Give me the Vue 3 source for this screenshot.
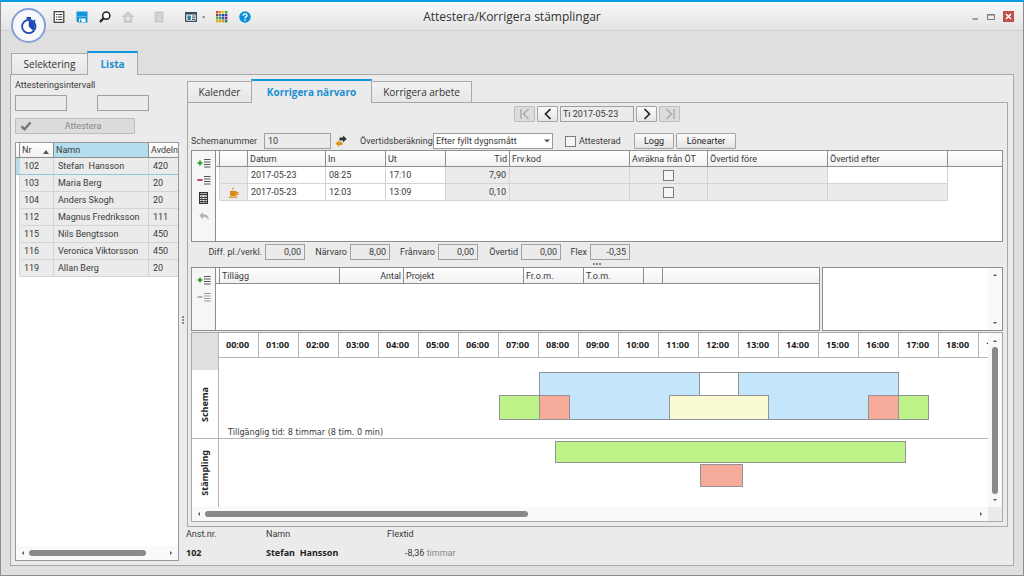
<script setup>
import { ref } from 'vue'

const employees = [
  { nr: '102', name: 'Stefan\u00a0 Hansson', dept: '420' },
  { nr: '103', name: 'Maria Berg', dept: '20' },
  { nr: '104', name: 'Anders Skogh', dept: '20' },
  { nr: '112', name: 'Magnus Fredriksson', dept: '111' },
  { nr: '115', name: 'Nils Bengtsson', dept: '450' },
  { nr: '116', name: 'Veronica Viktorsson', dept: '450' },
  { nr: '119', name: 'Allan Berg', dept: '20' }
]
const selected = ref('102')

const stamps = [
  { date: '2017-05-23', from: '08:25', to: '17:10', time: '7,90', pause: false },
  { date: '2017-05-23', from: '12:03', to: '13:09', time: '0,10', pause: true }
]

const sums = [
  { id: 'diff', label: 'Diff. pl./verkl.', value: '0,00' },
  { id: 'present', label: 'Närvaro', value: '8,00' },
  { id: 'absent', label: 'Frånvaro', value: '0,00' },
  { id: 'overtime', label: 'Övertid', value: '0,00' },
  { id: 'flex', label: 'Flex', value: '-0,35' }
]

const hours = Array.from({ length: 20 }, (_, i) => String(i).padStart(2, '0') + ':00')

const DAY = 959
const toPx = (minutes) => Math.round((minutes * DAY) / 1440)
const place = (b) => ({
  left: toPx(b.from) + 'px',
  width: toPx(b.to) - toPx(b.from) + 1 + 'px'
})
const schedule = [
  { from: 480, to: 1020, kind: 'frame' },
  { from: 480, to: 720, kind: 'work' },
  { from: 780, to: 1020, kind: 'work' },
  { from: 420, to: 480, kind: 'flex' },
  { from: 480, to: 525, kind: 'core' },
  { from: 675, to: 825, kind: 'lunch' },
  { from: 975, to: 1020, kind: 'core' },
  { from: 1020, to: 1065, kind: 'flex' }
]
const clocked = [
  { from: 505, to: 1030, kind: 'present' },
  { from: 723, to: 786, kind: 'break' }
]
const palette = ['#e03c31', '#f08c1e', '#e8c800', '#3aa845', '#8a3a2a', '#1d7ac2', '#2b3fa0', '#55308f', '#5fae30', '#35a040', '#3a4aa0', '#8a2a8a', '#d8b020', '#e8a000', '#c8a020', '#1f8a50']
</script>

<template>
  <div class="window">
    <header class="titlebar">
      <div class="logo">
        <svg viewBox="0 0 36 36" width="36" height="36">
          <circle cx="17.5" cy="17.5" r="16.500" fill="#f7f8fb" stroke="#869fd8" stroke-width="2" />
          <circle cx="17.800" cy="18.500" r="6.700" fill="#fff" stroke="#1b48b0" stroke-width="1.800" />
          <path d="M17.800 18.500V12.800A5.600 5.600 0 0 1 21.800 22.500Z" fill="#1b48b0" />
          <path d="M15.600 10h4.400M17.800 9.500v3M22.800 12.300l1.200 1.200" stroke="#1b48b0" stroke-width="2" />
        </svg>
      </div>
      <nav class="tools">
        <button aria-label="Lista">
          <svg viewBox="0 0 12 12" width="12" height="12"><rect x="1.200" y=".7" width="9.600" height="10.600" fill="#fff" stroke="#333" stroke-width="1.200" /><path d="M3 3.500h1.300M3 6h1.300M3 8.500h1.300M5.200 3.500H9.300M5.200 6H9.300M5.200 8.500H9.300" stroke="#333" /></svg>
        </button>
        <button aria-label="Spara">
          <svg viewBox="0 0 12 12" width="12" height="12"><path d="M.5.5h11v11H2L.5 10Z" fill="#1296db" /><path d="M1.500 5.500h9" stroke="#5bb8ea" /><path d="M3 7.500h6.500v3.500H3z" fill="#fff" /><path d="M4 8.500h1.500V11H4z" fill="#1296db" /></svg>
        </button>
        <button aria-label="Sök">
          <svg viewBox="0 0 12 12" width="12" height="12"><circle cx="7.300" cy="4.600" r="3.600" fill="#fff" stroke="#222" stroke-width="1.500" /><path d="M4.600 7.200.9 11" stroke="#222" stroke-width="2.200" /></svg>
        </button>
        <button aria-label="Hem" disabled>
          <svg viewBox="0 0 12 12" width="12" height="12"><path d="M.5 6 6 1.300 11.500 6" fill="none" stroke="#c6c6c6" stroke-width="1.500" /><path d="M2.300 6 6 3l3.700 3v5.300H2.300Z" fill="#d0d0d0" stroke="#c2c2c2" /><circle cx="6" cy="7.500" r="1.600" fill="#eee" /></svg>
        </button>
        <button class="calc" aria-label="Beräkna" disabled>
          <svg viewBox="0 0 12 12" width="12" height="12"><path d="M1.500.5h9v11h-9z" fill="#cacaca" /><path d="M3 3.500h6M3 6h6M6 5.500V11M3 8.500h6" stroke="#dedede" /></svg>
        </button>
        <button class="layout" aria-label="Layout">
          <svg viewBox="0 0 20 12" width="20" height="12"><rect x=".7" y="1.700" width="10.600" height="8.600" fill="#fff" stroke="#2c3e50" stroke-width="1.200" /><path d="M1 2.800h10" stroke="#2c3e50" stroke-width="1.400" /><path d="M2.500 4.500h3.300v4.500H2.500z" fill="#2a7aa8" /><path d="M7 5h3M7 6.800h3M7 8.500h3" stroke="#456" /><path d="M17 5.500h3.500l-1.700 2Z" fill="#666" /></svg>
        </button>
        <button aria-label="Färger">
          <svg viewBox="0 0 12 12" width="12" height="12">
            <rect v-for="(c, i) in palette" :key="i" :x="(i % 4) * 3" :y="Math.floor(i / 4) * 3" width="2.400" height="2.400" :fill="c" />
          </svg>
        </button>
        <button aria-label="Hjälp">
          <svg viewBox="0 0 12 12" width="12" height="12"><circle cx="6" cy="6" r="5.800" fill="#0a8fd8" /><path d="M4.100 4.700C4.100 2.300 7.900 2.300 7.900 4.500 7.900 5.800 6 5.900 6 7.300M6 8.300v1.500" fill="none" stroke="#fff" stroke-width="1.400" /></svg>
        </button>
      </nav>
      <h1>Attestera/Korrigera stämplingar</h1>
      <div class="winbtns">
        <button aria-label="Minimera"><svg viewBox="0 0 8 8" width="8" height="8"><path d="M1.500 6h5.500" stroke="#666" stroke-width="1.200" /></svg></button>
        <button aria-label="Maximera"><svg viewBox="0 0 8 8" width="8" height="8"><path d="M.5 1.500h7v5h-7zM.5 2h7" fill="none" stroke="#777" /></svg></button>
        <button class="close" aria-label="Stäng"><svg viewBox="0 0 11 11" width="11" height="11"><path d="M3 3l5 5M8 3 3 8" stroke="#fff" stroke-width="1.500" /></svg></button>
      </div>
    </header>

    <div class="tabs outer">
      <button class="tab">Selektering</button>
      <button class="tab active">Lista</button>
    </div>

    <main class="panel">
      <aside class="side">
        <label class="caption" for="ifrom">Attesteringsintervall</label>
        <div class="interval">
          <input id="ifrom" type="text" class="field" />
          <input type="text" class="field" aria-label="Till" />
        </div>
        <button class="btn attest" disabled>
          <svg viewBox="0 0 12 10" width="12" height="10"><path d="M1.500 5.300 4.500 8.200 10.500 1.500" fill="none" stroke="#777" stroke-width="2.400" /></svg>
          <span>Attestera</span>
        </button>
        <div class="listbox">
          <table class="list">
            <colgroup><col class="g4" /><col class="c34" /><col class="c95" /><col /></colgroup>
            <thead>
              <tr><th></th><th>Nr <svg class="sort" viewBox="0 0 6 4" width="6" height="4"><path d="M0 4h6L3 0Z" fill="#555" /></svg></th><th class="hot">Namn</th><th>Avdelning</th></tr>
            </thead>
            <tbody>
              <tr v-for="e in employees" :key="e.nr" :class="{ sel: e.nr === selected }" @click="selected = e.nr">
                <td></td><td>{{ e.nr }}</td><td>{{ e.name }}</td><td>{{ e.dept }}</td>
              </tr>
            </tbody>
          </table>
          <div class="hscroll">
            <svg viewBox="0 0 4 6" width="4" height="6"><path d="M3 1v4L1 3Z" fill="#555" /></svg>
            <div class="track"><div class="thumb side-thumb"></div></div>
            <svg viewBox="0 0 4 6" width="4" height="6"><path d="M1 1v4l2-2Z" fill="#555" /></svg>
          </div>
        </div>
      </aside>
      <div class="splitter"><i></i><i></i><i></i></div>

      <section class="content">
        <div class="tabs inner">
          <button class="tab">Kalender</button>
          <button class="tab active">Korrigera närvaro</button>
          <button class="tab">Korrigera arbete</button>
        </div>
        <div class="sheet">
          <div class="nav">
            <button class="btn sq" aria-label="Första" disabled><svg viewBox="0 0 12 12" width="12" height="12"><path d="M2 1v10M9.500 1 4.500 6l5 5" fill="none" stroke="#aaa" stroke-width="1.500" /></svg></button>
            <button class="btn sq" aria-label="Föregående"><svg viewBox="0 0 12 12" width="12" height="12"><path d="M8.500 1 3.500 6l5 5" fill="none" stroke="#222" stroke-width="1.700" /></svg></button>
            <input class="field date" value="Ti 2017-05-23" aria-label="Datum" readonly />
            <button class="btn sq" aria-label="Nästa"><svg viewBox="0 0 12 12" width="12" height="12"><path d="M3.500 1l5 5-5 5" fill="none" stroke="#222" stroke-width="1.700" /></svg></button>
            <button class="btn sq" aria-label="Sista" disabled><svg viewBox="0 0 12 12" width="12" height="12"><path d="M10 1v10M2.500 1l5 5-5 5" fill="none" stroke="#aaa" stroke-width="1.500" /></svg></button>
          </div>

          <div class="filter">
            <label class="schema-label" for="schema">Schemanummer</label>
            <input id="schema" class="field schema" value="10" readonly />
            <svg class="swap" viewBox="0 0 12 12" width="12" height="12"><path d="M4.500 2.500H8V.5L11.800 4 8 7.300V5.500H4.500Z" fill="#333" /><path d="M7.500 7v3H4.500v2L.3 8.500 4.500 5v2Z" fill="#e0951d" /></svg>
            <label class="ot-label" for="ot">Övertidsberäkning</label>
            <div class="combo">
              <select id="ot"><option>Efter fyllt dygnsmått</option></select>
              <svg viewBox="0 0 6 4" width="6" height="4"><path d="M0 .5h6L3 3.500Z" fill="#555" /></svg>
            </div>
            <label class="tick"><input type="checkbox" />Attesterad</label>
            <button class="btn logg">Logg</button>
            <button class="btn lone">Lönearter</button>
          </div>

          <div class="gridbox stampbox">
            <div class="rail">
              <button aria-label="Lägg till"><svg viewBox="0 0 14 10" width="14" height="10"><path d="M.5 5h5M3 2.500v5" stroke="#1a9b1f" stroke-width="1.600" /><path d="M7 1.500h6.500M7 4h6.500M7 6.500h6.500M7 9h6.500" stroke="#555" /></svg></button>
              <button aria-label="Ta bort"><svg viewBox="0 0 14 10" width="14" height="10"><path d="M.5 5h5" stroke="#c4122e" stroke-width="1.600" /><path d="M7 1.500h6.500M7 4h6.500M7 6.500h6.500M7 9h6.500" stroke="#555" /></svg></button>
              <button aria-label="Räkna"><svg viewBox="0 0 14 12" width="14" height="12"><rect x="2.600" y=".6" width="7.800" height="10.800" fill="#fff" stroke="#333" stroke-width="1.200" /><path d="M3 2.500h7" stroke="#333" stroke-width="1.500" /><path d="M3 5.500h7M3 7.500h7M3 9.500h7M5 4v7M8 4v7" stroke="#333" stroke-width=".9" /></svg></button>
              <button aria-label="Ångra" disabled><svg viewBox="0 0 14 10" width="14" height="10"><path d="M6 1v2.200c4 0 6 2 5.500 6C10.500 6.800 9 6 6 6v2.300L2.300 4.600Z" fill="#b4b4b4" /></svg></button>
            </div>
            <table class="grid">
              <colgroup><col class="g4" /><col class="c28" /><col class="c78" /><col class="c60" /><col class="c60" /><col class="c64" /><col class="c120" /><col class="c78" /><col class="c120" /><col class="c120" /><col /></colgroup>
              <thead>
                <tr><th></th><th></th><th>Datum</th><th>In</th><th>Ut</th><th class="r">Tid</th><th>Frv.kod</th><th>Avräkna från ÖT</th><th>Övertid före</th><th>Övertid efter</th><th></th></tr>
              </thead>
              <tbody>
                <tr v-for="s in stamps" :key="s.from">
                  <td class="w"></td>
                  <td class="ic"><svg v-if="s.pause" viewBox="0 0 10 11" width="10" height="11"><path d="M1 4h6.500v1H9.500v3H7.200C7 8.800 6.500 9 6 9H2.500C1.500 9 1 8.300 1 7ZM7.500 6v1h1V6ZM0 9.600h8.500v1.100H0Z" fill="#d98a10" fill-rule="evenodd" /><path d="M3.700 3.300C3 2.300 5 1.800 4.200.4" fill="none" stroke="#d98a10" /></svg></td>
                  <td class="w">{{ s.date }}</td><td class="w">{{ s.from }}</td><td class="w">{{ s.to }}</td>
                  <td class="r">{{ s.time }}</td><td></td>
                  <td class="ck"><input type="checkbox" aria-label="Avräkna från ÖT" /></td>
                  <td></td><td :class="{ w: !s.pause }"></td><td class="w none"></td>
                </tr>
              </tbody>
            </table>
          </div>

          <div class="sums">
            <div v-for="s in sums" :key="s.id" class="sum">
              <label :for="s.id">{{ s.label }}</label>
              <input :id="s.id" class="field r" :value="s.value" readonly />
            </div>
            <div class="dots"><i></i><i></i><i></i></div>
          </div>

          <div class="pair">
            <div class="gridbox addbox">
              <div class="rail">
                <button aria-label="Lägg till tillägg"><svg viewBox="0 0 14 10" width="14" height="10"><path d="M.5 5h5M3 2.500v5" stroke="#1a9b1f" stroke-width="1.600" /><path d="M7 1.500h6.500M7 4h6.500M7 6.500h6.500M7 9h6.500" stroke="#555" /></svg></button>
                <button aria-label="Ta bort tillägg" disabled><svg viewBox="0 0 14 10" width="14" height="10"><path d="M.5 5h5" stroke="#888" stroke-width="1.200" /><path d="M7 1.500h6.500M7 4h6.500M7 6.500h6.500M7 9h6.500" stroke="#999" /></svg></button>
              </div>
              <table class="grid">
                <colgroup><col class="g4" /><col class="c120" /><col class="c64" /><col class="c120" /><col class="c60" /><col class="c60" /><col class="c19" /><col /></colgroup>
                <thead>
                  <tr><th></th><th>Tillägg</th><th class="r">Antal</th><th>Projekt</th><th>Fr.o.m.</th><th>T.o.m.</th><th></th><th></th></tr>
                </thead>
              </table>
            </div>
            <div class="note">
              <textarea aria-label="Anteckning"></textarea>
              <div class="vscroll">
                <svg viewBox="0 0 6 4" width="6" height="4"><path d="M1 3h4L3 1Z" fill="#555" /></svg>
                <svg viewBox="0 0 6 4" width="6" height="4"><path d="M1 1h4L3 3Z" fill="#555" /></svg>
              </div>
            </div>
          </div>

          <div class="timeline">
            <div class="tl-main">
              <div class="tl-left">
                <div class="tl-corner"></div>
                <div class="tl-name schema-name"><span>Schema</span></div>
                <div class="tl-name"><span>Stämpling</span></div>
              </div>
              <div class="tl-view">
                <div class="tl-head"><div v-for="h in hours" :key="h">{{ h }}</div></div>
                <div class="lane lane-schema">
                  <div v-for="(b, i) in schedule" :key="i" class="bar" :class="b.kind" :style="place(b)"></div>
                  <p>Tillgänglig tid: 8 timmar (8 tim. 0 min)</p>
                </div>
                <div class="lane lane-stamp">
                  <div v-for="(b, i) in clocked" :key="i" class="bar" :class="b.kind" :style="place(b)"></div>
                </div>
              </div>
              <div class="vscroll">
                <svg viewBox="0 0 6 4" width="6" height="4"><path d="M1 3h4L3 1Z" fill="#555" /></svg>
                <div class="vthumb"></div>
                <svg viewBox="0 0 6 4" width="6" height="4"><path d="M1 1h4L3 3Z" fill="#555" /></svg>
              </div>
            </div>
            <div class="tl-foot">
              <div class="hscroll">
                <svg viewBox="0 0 4 6" width="4" height="6"><path d="M3 1v4L1 3Z" fill="#555" /></svg>
                <div class="track"><div class="thumb tl-thumb"></div></div>
                <svg viewBox="0 0 4 6" width="4" height="6"><path d="M1 1v4l2-2Z" fill="#555" /></svg>
              </div>
              <div class="tl-grip"></div>
            </div>
          </div>
        </div>

        <dl class="info">
          <div><dt>Anst.nr.</dt><dd>102</dd></div>
          <div class="who"><dt>Namn</dt><dd>Stefan&nbsp; Hansson</dd></div>
          <div class="balance"><dt>Flextid</dt><dd>-8,36 <small>timmar</small></dd></div>
        </dl>
      </section>
    </main>
  </div>
</template>

<style>
body { background: #dfdfdf; }
</style>

<style scoped>
* { box-sizing: border-box; }
.window {
  min-height: 100vh;
  display: flex;
  flex-direction: column;
  background: #dfdfdf;
  border: 1px solid #8c8c8c;
  border-top: 2px solid #0a9de8;
  padding-bottom: 9px;
  font: 9px/12px Roboto, "DejaVu Sans Condensed", sans-serif;
  color: #3a3a3a;
}
button, input, select, textarea { font: inherit; color: inherit; margin: 0; }
button { padding: 0; border: 0; background: none; display: flex; align-items: center; justify-content: center; }
svg { display: block; flex: none; }

.titlebar {
  position: relative;
  height: 29px;
  flex: none;
  display: flex;
  align-items: center;
  justify-content: space-between;
  background: linear-gradient(#f8f8f8, #e4e4e4);
  border-bottom: 1px solid #d2d2d2;
  padding: 1px 9px 0 52px;
}
.logo { position: absolute; left: 10px; top: 6px; }
.tools { display: flex; gap: 11px; }
.tools .calc { margin-left: 8px; }
.tools .layout { margin-left: 9px; }
h1 { position: absolute; left: 0; right: 0; text-align: center; margin: 0; font: 12px/16px "Open Sans", sans-serif; color: #333; pointer-events: none; }
.winbtns { display: flex; gap: 8px; align-items: center; }
.winbtns .close { background: #c0504d; }

.tabs { display: flex; align-items: flex-end; position: relative; z-index: 1; }
.tabs.outer { margin: 20px 0 -1px 10px; }
.tab { height: 22px; border: 1px solid #a9a9a9; background: linear-gradient(#f2f2f2, #e6e6e6); font: 10px/14px "Open Sans", sans-serif; color: #333; }
.tab + .tab { margin-left: -1px; }
.tab.active { height: 24px; border-top: 2px solid #0f96dc; border-bottom: 0; background: #ebebeb; color: #1a90d0; font-weight: 700; }
.outer .tab:first-child { width: 77px; }
.outer .tab.active { width: 51px; }
.inner .tab:nth-child(1) { width: 65px; }
.inner .tab:nth-child(2) { width: 121px; }
.inner .tab:nth-child(3) { width: 101px; }

.panel { flex: 1; display: flex; margin: 0 9px; border: 1px solid #a9a9a9; background: #ebebeb; }
.side { width: 168px; flex: none; display: flex; flex-direction: column; padding: 4px 0 4px 4px; }
.caption { display: block; }
.interval { display: flex; gap: 30px; margin-top: 4px; }
.interval .field { width: 52px; }
.field { height: 16px; border: 1px solid #a0a0a0; background: #ebebeb; padding: 0 3px; border-radius: 0; outline: 0; min-width: 0; }
.field.r { text-align: right; }
.btn { height: 16px; border: 1px solid #a4a4a4; border-radius: 1px; background: linear-gradient(#fbfbfb, #e4e4e4); color: #222; }
.btn:disabled { background: #dcdcdc; border-color: #bdbdbd; color: #888; }
.btn.attest { width: 120px; margin-top: 7px; justify-content: flex-start; padding-left: 4px; }
.attest span { flex: 1; text-align: center; }
.listbox { flex: 1; margin-top: 8px; border: 1px solid #999; background: #fff; display: flex; flex-direction: column; justify-content: space-between; overflow: hidden; }

table { border-collapse: separate; border-spacing: 0; table-layout: fixed; width: 100%; }
th { height: 16px; padding: 0 2px; font-weight: 400; text-align: left; line-height: 14px; background: linear-gradient(#fff, #f1f1f1); border-bottom: 1px solid #8e8e8e; border-right: 1px solid #8e8e8e; white-space: nowrap; overflow: hidden; }
th:last-child { border-right: 0; }
td { height: 17px; padding: 0 3px; line-height: 14px; background: #ebebeb; border-right: 1px solid #d4d4d4; border-bottom: 1px solid #d4d4d4; white-space: nowrap; overflow: hidden; }
.r { text-align: right; }
.g4 { width: 4px; } .c19 { width: 19px; } .c28 { width: 28px; } .c34 { width: 34px; } .c60 { width: 60px; } .c64 { width: 64px; }
.c78 { width: 78px; } .c95 { width: 95px; } .c120 { width: 120px; }
th:first-child, td:first-child { padding: 0; }
.list th { height: 15px; line-height: 13px; }
.list td { padding: 0 4px; }
.list th:last-child { padding-right: 0; }
.list .hot { background: #b3dcec; }
.sort { float: right; margin: 6px 2px 0 0; }
.list td:first-child { background: #fff; border-bottom-color: #fff; padding: 0; }
.list td:last-child { border-right: 0; }
.list .sel td { border-bottom-color: #8cc8e0; }
.list .sel td:first-child { background: #b3dcec; }

.hscroll { flex: 1; height: 14px; display: flex; align-items: center; gap: 4px; padding: 0 5px; background: #f9f9f9; }
.listbox .hscroll { flex: none; }
.track { flex: 1; }
.thumb { height: 6px; border-radius: 3px; background: #8a8a8a; }
.side-thumb { width: 86%; }
.tl-thumb { width: 42%; }

.splitter { width: 7px; flex: none; display: flex; flex-direction: column; align-items: center; justify-content: center; gap: 1px; }
.splitter i, .dots i { width: 2px; height: 2px; background: #888; }

.content { flex: 1; min-width: 0; display: flex; flex-direction: column; padding: 4px 5px 0 0; }
.inner { margin: 0 0 -1px 1px; }
.sheet { flex: 1; display: flex; flex-direction: column; margin-left: 1px; border: 1px solid #a9a9a9; padding: 3px 4px 4px 3px; }
.nav { display: flex; justify-content: center; gap: 2px; }
.btn.sq { width: 21px; }
.field.date { width: 74px; padding: 0 2px; }
.filter { display: flex; align-items: center; margin-top: 11px; height: 16px; white-space: nowrap; }
.schema-label { width: 73px; }
.schema { width: 67px; }
.swap { margin: 0 13px 0 4px; }
.ot-label { width: 73px; }
.combo { position: relative; width: 120px; }
.combo select { appearance: none; width: 100%; height: 16px; border: 1px solid #999; border-radius: 0; background: #fff; padding: 0 2px; display: block; }
.combo svg { position: absolute; right: 3px; top: 6px; }
.tick { display: flex; align-items: center; gap: 3px; width: 69px; margin-left: 12px; }
input[type="checkbox"] { appearance: none; width: 11px; height: 11px; border: 1px solid #7c7c7c; background: #f6f6f6; flex: none; }
.logg { width: 40px; }
.lone { width: 60px; margin-left: 2px; }

.gridbox { display: flex; align-items: flex-start; border: 1px solid #8e8e8e; background: #fff; min-width: 0; }
.stampbox { min-height: 92px; margin-top: 1px; }
.rail { width: 24px; flex: none; align-self: stretch; border-right: 1px solid #8e8e8e; background: #f6f6f6; display: flex; flex-direction: column; align-items: center; gap: 7px; padding-top: 7px; }
.grid { flex: 1; }
.grid .w { background: #fff; }
.grid td:first-child { border-bottom-color: #fff; }
.grid .none { border: 0; }
.grid .ic svg { margin: 0 auto; }
.ck input { display: block; margin: 0 auto; }

.sums { position: relative; display: grid; grid-template-columns: 114px 85px 88px 83px 69px; height: 25px; padding-top: 2px; }
.sum { display: flex; align-items: center; justify-content: flex-end; height: 16px; gap: 3px; white-space: nowrap; }
.sum .field { width: 40px; }
.dots { position: absolute; left: 0; right: 0; bottom: 2px; display: flex; justify-content: center; gap: 1px; }

.pair { display: flex; gap: 2px; height: 64px; }
.addbox { flex: 630 1 0; }
.note { flex: 180 1 0; display: flex; border: 1px solid #8e8e8e; background: #fff; }
.note textarea { flex: 1; min-width: 0; border: 0; resize: none; outline: 0; background: none; }
.vscroll { width: 14px; flex: none; display: flex; flex-direction: column; align-items: center; justify-content: space-between; background: #f9f9f9; padding: 5px 0; }

.timeline { flex: 1; display: flex; flex-direction: column; margin-top: 1px; border: 1px solid #a9a9a9; background: #fff; min-width: 0; }
.tl-main { flex: 1; display: flex; }
.tl-left { width: 27px; flex: none; display: flex; flex-direction: column; border-right: 1px solid #b5b5b5; }
.tl-corner { height: 37px; background: #dfdfdf; }
.tl-name { flex: 1; display: flex; align-items: center; justify-content: center; font: bold 9px/12px "Noto Sans", sans-serif; color: #222; }
.schema-name { flex: none; height: 69px; border-bottom: 1px solid #b5b5b5; }
.tl-name span { writing-mode: vertical-rl; transform: rotate(180deg); }
.tl-view { flex: 1; width: 0; overflow: hidden; }
.tl-head { display: flex; height: 25px; border-bottom: 1px solid #b5b5b5; overflow: hidden; }
.tl-head div { flex: none; width: 40px; line-height: 24px; padding-left: 7px; border-right: 1px solid #b5b5b5; font-weight: 700; font-family: "Noto Sans", sans-serif; color: #222; }
.lane { position: relative; }
.lane-schema { height: 81px; border-bottom: 1px solid #b5b5b5; }
.lane-schema p { position: absolute; left: 9px; bottom: 0; margin: 0; font-family: "DejaVu Sans Condensed", sans-serif; }
.bar { position: absolute; border: 1px solid #909498; }
.frame { top: 14px; height: 25px; background: #fff; }
.work { top: 14px; height: 48px; background: #c5e5fa; }
.flex { top: 37px; height: 25px; background: #bdf388; }
.core { top: 37px; height: 25px; background: #f6ab9a; }
.lunch { top: 37px; height: 25px; background: #f9fad2; }
.present { top: 2px; height: 22px; background: #bdf388; }
.break { top: 25px; height: 23px; background: #f6ab9a; }
.tl-foot { display: flex; }
.tl-grip { width: 14px; background: #ebebeb; }
.tl-main .vscroll { padding: 6px 0 5px; gap: 4px; }
.vthumb { flex: 1; width: 6px; border-radius: 3px; background: #8a8a8a; }

.info { display: flex; margin: 1px 0 0; height: 37px; }
.info dt { line-height: 12px; }
.info dd { margin: 7px 0 0; line-height: 12px; font-weight: 700; color: #222; font-family: "Noto Sans", sans-serif; }
.info > div:first-child { width: 80px; }
.who { width: 121px; }
.info .balance dd { font: inherit; padding-left: 18px; color: #3a3a3a; }
small { font-size: 9px; color: #888; }
</style>
